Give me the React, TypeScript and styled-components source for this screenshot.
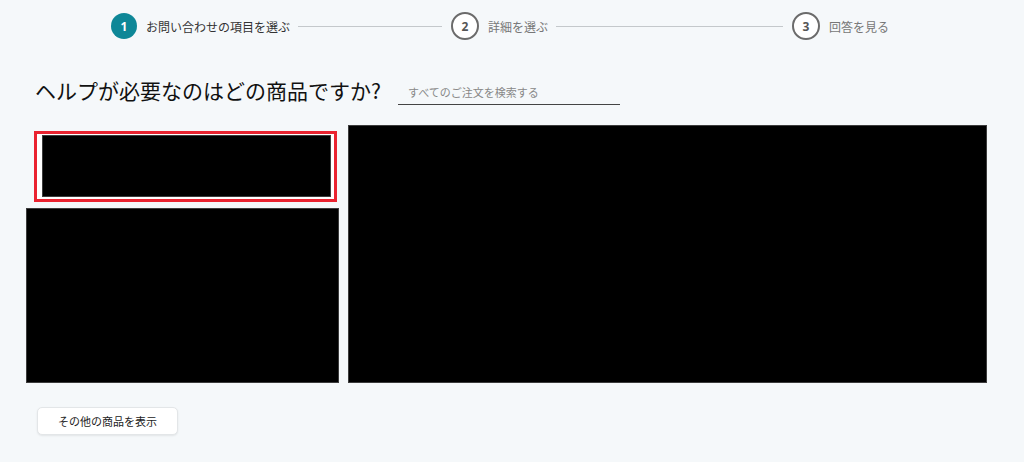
import styled, { createGlobalStyle } from "styled-components";

const Global = createGlobalStyle`
  html, body {
    margin: 0;
    padding: 0;
    background: #f5f8fa;
    font-family: "Noto Sans CJK JP", "Noto Sans", sans-serif;
    color: #222;
  }
`;

const Page = styled.div`
  width: 1024px;
  height: 462px;
  background: #f5f8fa;
  overflow: hidden;
`;

const Stepper = styled.div`
  display: flex;
  align-items: center;
  height: 52px;
  padding-left: 111px;
`;

const Step = styled.div`
  display: flex;
  align-items: center;
  gap: 9px;
`;

const Circle = styled.div<{ $active?: boolean }>`
  width: ${(p) => (p.$active ? 26 : 28)}px;
  height: ${(p) => (p.$active ? 26 : 28)}px;
  box-sizing: border-box;
  border-radius: 50%;
  display: flex;
  align-items: center;
  justify-content: center;
  font-family: "Open Sans", "Noto Sans", sans-serif;
  font-weight: 700;
  font-size: 12px;
  background: ${(p) => (p.$active ? "#0e8797" : "#fff")};
  color: ${(p) => (p.$active ? "#fff" : "#555")};
  border: ${(p) => (p.$active ? "none" : "2px solid #6b6b6b")};
`;

const StepLabel = styled.span<{ $active?: boolean }>`
  font-size: 12px;
  color: ${(p) => (p.$active ? "#333" : "#777")};
`;

const Line = styled.div<{ $w: number }>`
  width: ${(p) => p.$w}px;
  height: 1px;
  background: #c4c8cb;
  margin: 0 9px 0 8px;
`;

const HeadRow = styled.div`
  display: flex;
  align-items: flex-end;
  padding: 22px 0 0 35px;
  height: 51px;
  box-sizing: border-box;
`;

const Title = styled.h1`
  margin: 0 0 -1px;
  font-size: 21px;
  font-weight: 400;
  color: #111;
  line-height: 28px;
`;

const Search = styled.input`
  margin: 0 0 -2px 17px;
  width: 222px;
  height: 26px;
  box-sizing: border-box;
  border: none;
  border-bottom: 1px solid #444;
  background: transparent;
  padding: 0 10px;
  font-family: inherit;
  font-size: 11px;
  outline: none;
  &::placeholder {
    color: #888;
  }
`;

const Grid = styled.div`
  display: grid;
  grid-template-columns: 313px 639px;
  gap: 9px;
  padding: 22px 0 0 26px;
`;

const Column = styled.div`
  display: flex;
  flex-direction: column;
  gap: 6px;
  padding-top: 6px;
`;

const Redacted = styled.div<{ $h?: number }>`
  background: #000;
  border: 1px solid #3c3c3c;
  box-sizing: border-box;
  height: ${(p) => (p.$h ? `${p.$h}px` : "100%")};
`;

const Selected = styled.div`
  margin: 0 2px 0 8px;
  height: 71px;
  box-sizing: border-box;
  border: 3px solid #ea2330;
  background: #fff;
  padding: 1px 3px 2px 5px;
`;

const Big = styled.div`
  height: 258px;
`;

const More = styled.button`
  margin: 24px 0 0 37px;
  width: 141px;
  height: 28px;
  border: 1px solid #e3e6e8;
  border-radius: 5px;
  background: #fff;
  box-shadow: 0 1px 2px rgba(0, 0, 0, 0.08);
  font-family: inherit;
  font-size: 11px;
  color: #222;
  cursor: pointer;
`;

export default function App() {
  return (
    <Page>
      <Global />
      <Stepper>
        <Step>
          <Circle $active>1</Circle>
          <StepLabel $active>お問い合わせの項目を選ぶ</StepLabel>
        </Step>
        <Line $w={144} />
        <Step>
          <Circle>2</Circle>
          <StepLabel>詳細を選ぶ</StepLabel>
        </Step>
        <Line $w={227} />
        <Step>
          <Circle>3</Circle>
          <StepLabel>回答を見る</StepLabel>
        </Step>
      </Stepper>
      <HeadRow>
        <Title>ヘルプが必要なのはどの商品ですか?</Title>
        <Search placeholder="すべてのご注文を検索する" />
      </HeadRow>
      <Grid>
        <Column>
          <Selected>
            <Redacted />
          </Selected>
          <Redacted $h={175} />
        </Column>
        <Big>
          <Redacted />
        </Big>
      </Grid>
      <More>その他の商品を表示</More>
    </Page>
  );
}
